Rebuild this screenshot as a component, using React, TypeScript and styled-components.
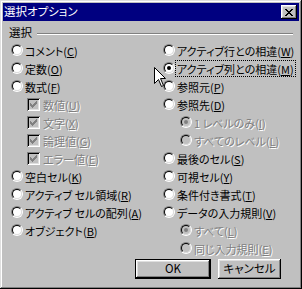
import React from "react";
import styled, { createGlobalStyle } from "styled-components";

const Global = createGlobalStyle`
  html, body { margin: 0; padding: 0; background: #c0c0c0; }
  body {
    font-family: "Noto Sans CJK JP", "Noto Sans", sans-serif;
    font-size: 11px;
    font-feature-settings: "palt";
  }
  * { box-sizing: border-box; }
`;

const Window = styled.div`
  position: relative;
  width: 302px;
  height: 289px;
  padding: 3px;
  display: flex;
  flex-direction: column;
  background: #c0c0c0;
  box-shadow: inset -1px -1px #000, inset 1px 1px #dfdfdf,
    inset -2px -2px #808080, inset 2px 2px #fff;
  overflow: hidden;
`;

const TitleBar = styled.div`
  height: 18px;
  flex: none;
  display: flex;
  align-items: center;
  padding-left: 1px;
  background: #000080;
  color: #fff;
`;

const TitleText = styled.span`
  font-size: 11.5px;
  line-height: 1;
`;

const CloseButton = styled.div`
  margin-left: auto;
  margin-right: 2px;
  width: 16px;
  height: 14px;
  display: flex;
  align-items: center;
  justify-content: center;
  background: #c0c0c0;
  box-shadow: inset -1px -1px #000, inset 1px 1px #fff,
    inset -2px -2px #808080, inset 2px 2px #dfdfdf;
`;

const Content = styled.div`
  flex: 1;
  display: flex;
  flex-direction: column;
`;

const GroupHeader = styled.div`
  height: 16px;
  margin-top: 4px;
  padding: 0 6px 0 6px;
  display: flex;
  align-items: center;
  color: #000;
  line-height: 1;
  font-size: 11.5px;
`;

const Rule = styled.div`
  flex: 1;
  height: 2px;
  margin-left: 5px;
  margin-top: 1px;
  border-top: 1px solid #808080;
  border-bottom: 1px solid #fff;
`;

const Columns = styled.div`
  display: grid;
  grid-template-columns: 152px 1fr;
  padding-left: 8px;
`;

const Column = styled.div`
  display: flex;
  flex-direction: column;
`;

const Row = styled.div<{ $indent?: number }>`
  height: 18px;
  display: flex;
  align-items: center;
  padding-left: ${(p) => p.$indent ?? 0}px;
`;

const RadioOuter = styled.span`
  flex: none;
  width: 12px;
  height: 12px;
  border-radius: 50%;
  border: 1px solid;
  border-color: #808080 #fff #fff #808080;
  display: flex;
  align-items: center;
  justify-content: center;
`;

const RadioInner = styled.span<{ $disabled?: boolean }>`
  width: 10px;
  height: 10px;
  border-radius: 50%;
  border: 1px solid;
  border-color: #000 #dfdfdf #dfdfdf #000;
  background: ${(p) => (p.$disabled ? "#c0c0c0" : "#fff")};
  display: flex;
  align-items: center;
  justify-content: center;
`;

const Dot = styled.span<{ $disabled?: boolean }>`
  width: 4px;
  height: 4px;
  border-radius: 50%;
  background: ${(p) => (p.$disabled ? "#808080" : "#000")};
`;

const CheckBox = styled.span`
  flex: none;
  width: 13px;
  height: 13px;
  display: flex;
  align-items: center;
  justify-content: center;
  background: #c0c0c0;
  box-shadow: inset 1px 1px #808080, inset -1px -1px #fff,
    inset 2px 2px #000, inset -2px -2px #dfdfdf;
`;

const Label = styled.span<{ $disabled?: boolean; $focus?: boolean; $gap?: number }>`
  margin-left: ${(p) => p.$gap ?? 1}px;
  padding: 2px 1px 1px;
  line-height: 12px;
  white-space: nowrap;
  color: ${(p) => (p.$disabled ? "#808080" : "#000")};
  text-shadow: ${(p) => (p.$disabled ? "1px 1px 0 #fff" : "none")};
  outline: ${(p) => (p.$focus ? "1px dotted #000" : "none")};
  outline-offset: 0;
  u {
    text-underline-offset: 1px;
  }
`;

const ButtonBar = styled.div`
  display: flex;
  justify-content: flex-end;
  gap: 7px;
  margin-top: 2px;
  padding-right: 18px;
`;

const Button = styled.div<{ $default?: boolean; $width: number }>`
  width: ${(p) => p.$width}px;
  height: 20px;
  display: flex;
  align-items: center;
  justify-content: center;
  background: #c0c0c0;
  color: #000;
  line-height: 1;
  font-size: 11.5px;
  border: ${(p) => (p.$default ? "1px solid #000" : "none")};
  box-shadow: inset -1px -1px #000, inset 1px 1px #fff,
    inset -2px -2px #808080, inset 2px 2px #dfdfdf;
`;

const Cursor = styled.svg`
  position: absolute;
  left: 154px;
  top: 67px;
`;

type Item = {
  kind: "radio" | "check";
  text: string;
  key: string;
  indent?: number;
  checked?: boolean;
  disabled?: boolean;
  focus?: boolean;
};

const leftItems: Item[] = [
  { kind: "radio", text: "コメント", key: "C" },
  { kind: "radio", text: "定数", key: "O" },
  { kind: "radio", text: "数式", key: "F" },
  { kind: "check", text: "数値", key: "U", indent: 16, checked: true, disabled: true },
  { kind: "check", text: "文字", key: "X", indent: 16, checked: true, disabled: true },
  { kind: "check", text: "論理値", key: "G", indent: 16, checked: true, disabled: true },
  { kind: "check", text: "エラー値", key: "E", indent: 16, checked: true, disabled: true },
  { kind: "radio", text: "空白セル", key: "K" },
  { kind: "radio", text: "アクティブ セル領域", key: "R" },
  { kind: "radio", text: "アクティブ セルの配列", key: "A" },
  { kind: "radio", text: "オブジェクト", key: "B" },
];

const rightItems: Item[] = [
  { kind: "radio", text: "アクティブ行との相違", key: "W" },
  { kind: "radio", text: "アクティブ列との相違", key: "M", checked: true, focus: true },
  { kind: "radio", text: "参照元", key: "P" },
  { kind: "radio", text: "参照先", key: "D" },
  { kind: "radio", text: "1 レベルのみ", key: "I", indent: 17, checked: true, disabled: true },
  { kind: "radio", text: "すべてのレベル", key: "L", indent: 17, disabled: true },
  { kind: "radio", text: "最後のセル", key: "S" },
  { kind: "radio", text: "可視セル", key: "Y" },
  { kind: "radio", text: "条件付き書式", key: "T" },
  { kind: "radio", text: "データの入力規則", key: "V" },
  { kind: "radio", text: "すべて", key: "L", indent: 17, checked: true, disabled: true },
  { kind: "radio", text: "同じ入力規則", key: "E", indent: 17, disabled: true },
];

const CheckMark = () => (
  <svg width="7" height="7" viewBox="0 0 7 7" shapeRendering="crispEdges">
    <path
      fill="#808080"
      d="M6 0h1v1h-1zM5 1h2v1h-2zM0 2h1v1h-1zM4 2h3v1h-3zM0 3h2v1h-2zM3 3h3v1h-3zM0 4h5v1h-5zM1 5h3v1h-3zM2 6h1v1h-1z"
    />
  </svg>
);

const ItemRow = ({ item }: { item: Item }) => (
  <Row $indent={item.indent}>
    {item.kind === "radio" ? (
      <RadioOuter>
        <RadioInner $disabled={item.disabled}>
          {item.checked && <Dot $disabled={item.disabled} />}
        </RadioInner>
      </RadioOuter>
    ) : (
      <CheckBox>{item.checked && <CheckMark />}</CheckBox>
    )}
    <Label $disabled={item.disabled} $focus={item.focus} $gap={item.kind === "check" ? 2 : 1}>
      {item.text}(<u>{item.key}</u>)
    </Label>
  </Row>
);

export default function App() {
  return (
    <>
      <Global />
      <Window>
        <TitleBar>
          <TitleText>選択オプション</TitleText>
          <CloseButton>
            <svg width="8" height="7" viewBox="0 0 8 7" shapeRendering="crispEdges">
              <path
                fill="#000"
                d="M0 0h2v1h-2zM6 0h2v1h-2zM1 1h2v1h-2zM5 1h2v1h-2zM2 2h4v1h-4zM3 3h2v1h-2zM2 4h4v1h-4zM1 5h2v1h-2zM5 5h2v1h-2zM0 6h2v1h-2zM6 6h2v1h-2z"
              />
            </svg>
          </CloseButton>
        </TitleBar>
        <Content>
          <GroupHeader>
            <span>選択</span>
            <Rule />
          </GroupHeader>
          <Columns>
            <Column>
              {leftItems.map((it, i) => (
                <ItemRow key={i} item={it} />
              ))}
            </Column>
            <Column>
              {rightItems.map((it, i) => (
                <ItemRow key={i} item={it} />
              ))}
            </Column>
          </Columns>
          <ButtonBar>
            <Button $default $width={76}>OK</Button>
            <Button $width={63}>キャンセル</Button>
          </ButtonBar>
        </Content>
        <Cursor width="13" height="21" viewBox="0 0 13 21">
          <path
            d="M0.5 0.5V16.5L4.5 12.5L7.5 19.5L9.5 18.5L6.5 11.5H11.5Z"
            fill="#fff"
            stroke="#000"
            strokeWidth="1"
            strokeLinejoin="miter"
          />
        </Cursor>
      </Window>
    </>
  );
}
